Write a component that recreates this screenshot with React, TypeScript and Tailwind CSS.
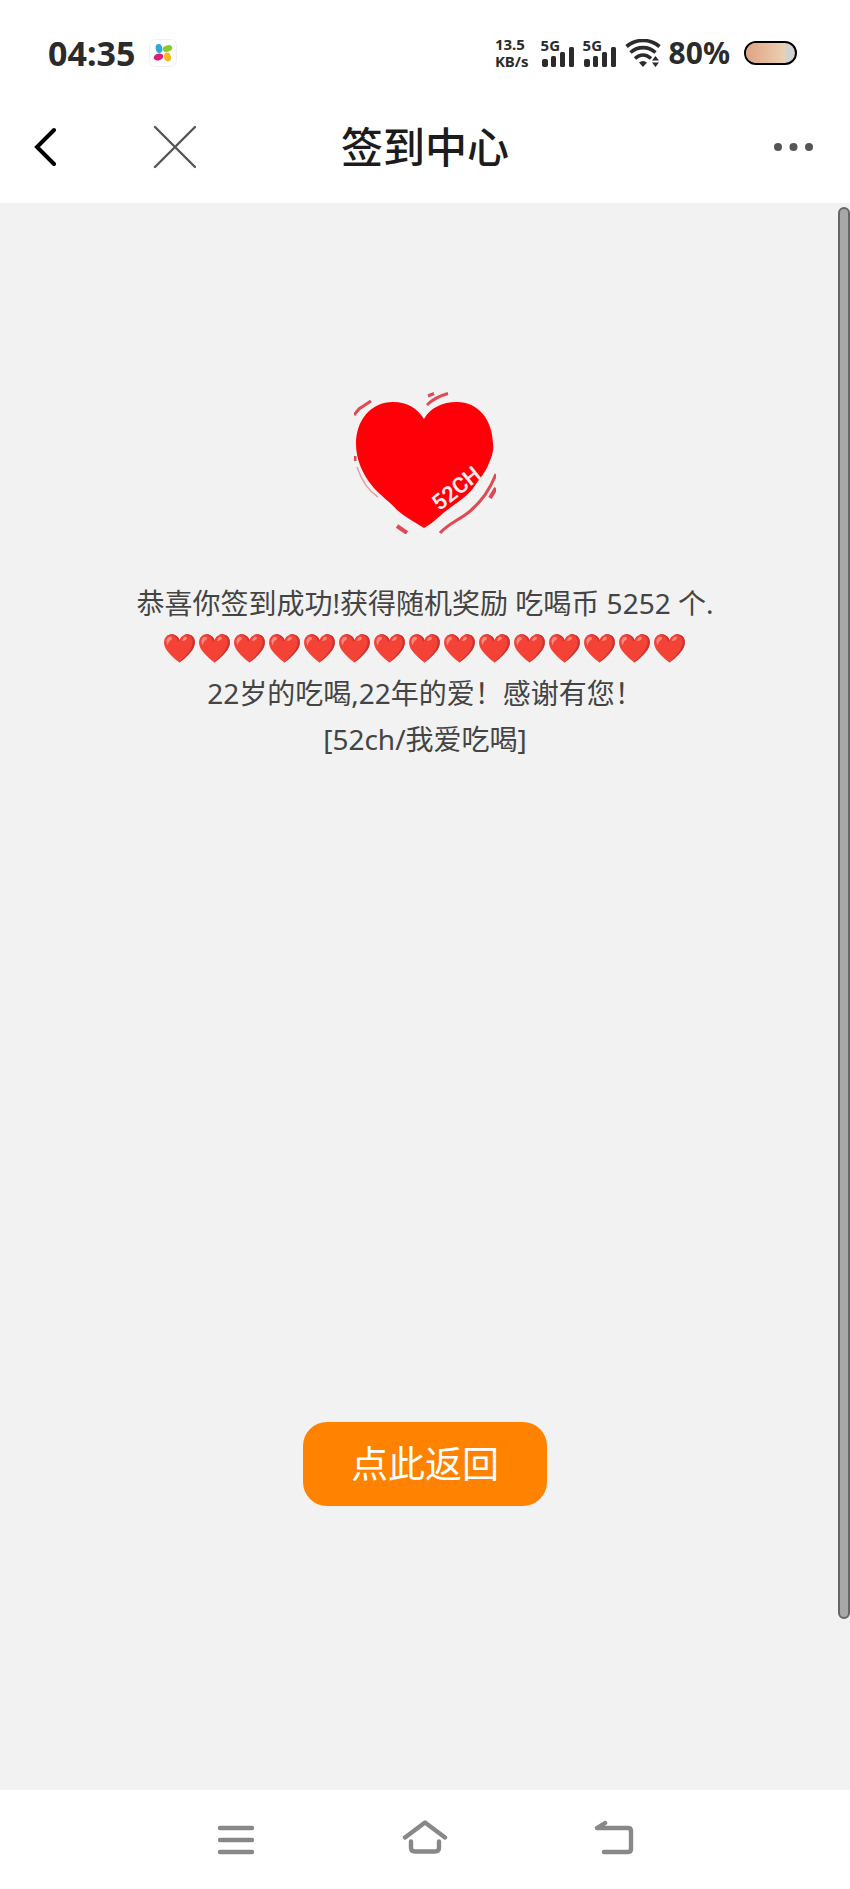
const textFont = "font-['Noto_Sans','Noto_Sans_CJK_SC',sans-serif]";
const cjkFont = "font-['Noto_Sans_CJK_SC',sans-serif]";

function AppBadge() {
  return (
    <svg className="size-7" viewBox="0 0 28 28" aria-hidden="true">
      <rect x="0.5" y="0.5" width="27" height="27" rx="6" fill="#fff" stroke="#f0eeee" />
      <ellipse cx="10" cy="9.5" rx="3.3" ry="4.5" fill="#2fa8d8" transform="rotate(-12 10 9.5)" />
      <ellipse cx="18.500" cy="9.5" rx="4.8" ry="3.2" fill="#8cc928" transform="rotate(-18 18.5 9.5)" />
      <ellipse cx="9.5" cy="18" rx="4.800" ry="3.4" fill="#dc1f7d" transform="rotate(-14 9.5 18)" />
      <ellipse cx="18.5" cy="18" rx="3.4" ry="4.5" fill="#f5b91c" transform="rotate(-12 18.5 18)" />
    </svg>
  );
}

function Signal() {
  return (
    <div className="relative h-7 w-[34px]">
      <span className="absolute top-0 left-0 text-[15px] leading-3 font-bold">5G</span>
      <svg className="size-full" viewBox="0 0 34 28" fill="currentColor" aria-hidden="true">
        <rect x="1" y="20" width="6" height="8" rx="2" />
        <rect x="10" y="17" width="5" height="11" rx="1.5" />
        <rect x="19" y="13" width="5" height="15" rx="1.5" />
        <rect x="28" y="8" width="5" height="20" rx="1.5" />
      </svg>
    </div>
  );
}

function Wifi() {
  return (
    <svg className="h-7 w-9" viewBox="0 0 36 28" fill="none" stroke="currentColor" strokeWidth="3.6" aria-hidden="true">
      <path d="M1.5 7.5C11-.5 25-.5 34.5 7.5" />
      <path d="M5.500 13.5c7.5-6.500 17.5-6.5 25 0" />
      <path d="M10 19.5c5-4.5 11-4.5 16 0" />
      <path d="M14 23.5q4-3 8 0L18 28z" fill="currentColor" stroke="none" />
      <path d="M27 21.5 30.5 17 34 21.5zM27 23.5 30.5 28 34 23.5z" fill="currentColor" stroke="none" />
    </svg>
  );
}

function Battery() {
  return (
    <div className="flex h-6 w-[53px] overflow-hidden rounded-full border-2 border-black bg-[#d2d2d2]">
      <div className="w-4/5 bg-linear-to-r from-[#dfa382] to-[#ecd0b4]" />
    </div>
  );
}

function StatusBar() {
  return (
    <div className={`flex h-[90px] items-center pt-4 pr-[53px] pl-12 text-[#2b2b2b] ${textFont}`}>
      <span className="text-[34px] leading-9 font-bold">04:35</span>
      <div className="ml-[14px]">
        <AppBadge />
      </div>
      <div className="ml-auto flex items-center gap-2">
        <div className="mr-1 text-[15px] leading-[17px] font-bold">
          <div>13.5</div>
          <div>KB/s</div>
        </div>
        <Signal />
        <Signal />
        <Wifi />
        <span className="text-3xl leading-8 font-bold">80%</span>
        <div className="ml-1.5">
          <Battery />
        </div>
      </div>
    </div>
  );
}

function TitleBar() {
  return (
    <header className="grid h-[113px] grid-cols-3 items-center px-8">
      <div className="flex items-center gap-24">
        <button type="button" aria-label="返回">
          <svg className="h-10 w-6" viewBox="0 0 24 40" fill="none" stroke="#000" strokeWidth="4" strokeLinecap="round">
            <path d="M22 3 5 20 22 37" />
          </svg>
        </button>
        <button type="button" aria-label="关闭">
          <svg className="size-11" viewBox="0 0 44 44" fill="none" stroke="#555" strokeWidth="2.4" strokeLinecap="round">
            <path d="M3 2 43 42M43 2 3 42" />
          </svg>
        </button>
      </div>
      <h1 className={`pb-1 text-center text-[42px] leading-12 font-medium text-[#1c1c1c] ${cjkFont}`}>签到中心</h1>
      <button type="button" aria-label="更多" className="justify-self-end">
        <svg className="h-10 w-12" viewBox="0 0 48 40" fill="#555">
          <circle cx="8" cy="20" r="4" />
          <circle cx="23.5" cy="20" r="4" />
          <circle cx="39" cy="20" r="4" />
        </svg>
      </button>
    </header>
  );
}

function HeartLogo() {
  return (
    <svg className="size-[142px]" viewBox="0 0 142 142" role="img" aria-label="52CH">
      <path
        d="M70 27C64 17 54 10 39 10 17 10 2 28 2 52c0 16 7 31 17 43 8 9 17 15 24 23 8 7 18 12 27 18 8-4 14-11 22-17 10-8 21-14 28-24 5-8 12-15 15-24 3-7 5-12 4-20C138 27 124 10 103 10 88 10 76 16 70 27z"
        fill="#ff0009"
      />
      <g fill="none" stroke="#e04a55" strokeWidth="3">
        <path d="M0 23 5 17 17 9" />
        <path d="M73 13Q81 5 94 1.5" />
        <path d="M74 4 80 1.5" />
        <path d="M1 64v5" />
        <path d="M3 75Q10 96 24 105" strokeWidth="1.5" opacity="0.5" />
        <path d="M86 141c8-9 19-13 29-21 11-9 20-20 27-38" />
        <path d="M136 106 142 96" strokeWidth="4" />
        <path d="M43 134 53 141" strokeWidth="4" />
      </g>
      <text
        x="102"
        y="104"
        transform="rotate(-39 102 96)"
        textAnchor="middle"
        fontSize="22"
        fontWeight="600"
        fill="#fbeaea"
        className="font-['Roboto',sans-serif]"
      >
        52CH
      </text>
    </svg>
  );
}

function NavBar() {
  return (
    <nav className="grid h-[99px] grid-cols-3 items-center bg-white px-[142px]">
      <button type="button" aria-label="菜单" className="justify-self-center">
        <svg className="h-10 w-12" viewBox="0 0 48 40" fill="none" stroke="#888" strokeWidth="4.4" strokeLinecap="round">
          <path d="M8 8H40M8 20H40M8 32H40" />
        </svg>
      </button>
      <button type="button" aria-label="主页" className="justify-self-center">
        <svg
          className="h-10 w-12"
          viewBox="0 0 48 40"
          fill="none"
          stroke="#888"
          strokeWidth="4.4"
          strokeLinecap="round"
          strokeLinejoin="round"
        >
          <path d="M4 17.5 24 2.5 44 17.500" />
          <path d="M10 21.5V28q0 3.500 4 3.500H34q4 0 4-3.500V21.5" />
        </svg>
      </button>
      <button type="button" aria-label="后退" className="justify-self-center">
        <svg
          className="h-10 w-12"
          viewBox="0 0 48 40"
          fill="none"
          stroke="#888"
          strokeWidth="4.4"
          strokeLinecap="round"
          strokeLinejoin="round"
        >
          <path d="M15 3 7 8H38q3 0 3 3V29q0 3-3 3H14" />
        </svg>
      </button>
    </nav>
  );
}

export default function App() {
  return (
    <div className="flex min-h-screen flex-col bg-white">
      <StatusBar />
      <TitleBar />
      <main className="relative flex flex-1 flex-col items-center bg-[#f2f2f2] pt-[189px] pb-[284px]">
        <HeartLogo />
        <div className={`mt-[46px] text-center text-[28px] leading-[46px] text-[#444] ${textFont}`}>
          <p>恭喜你签到成功!获得随机奖励 吃喝币 5252 个.</p>
          <div className="-mt-0.5">
            <p>{"❤️".repeat(15)}</p>
            <p>22岁的吃喝,22年的爱！感谢有您！</p>
            <p>[52ch/我爱吃喝]</p>
          </div>
        </div>
        <button
          type="button"
          className={`mt-auto h-[84px] rounded-3xl bg-[#ff8300] px-12 pb-1 text-[37px] leading-10 text-white ${cjkFont}`}
        >
          点此返回
        </button>
        <div className="absolute top-1 right-0 h-[89%] w-3 rounded-full border-2 border-[#666] bg-[#a8a8a8]" />
      </main>
      <NavBar />
    </div>
  );
}
